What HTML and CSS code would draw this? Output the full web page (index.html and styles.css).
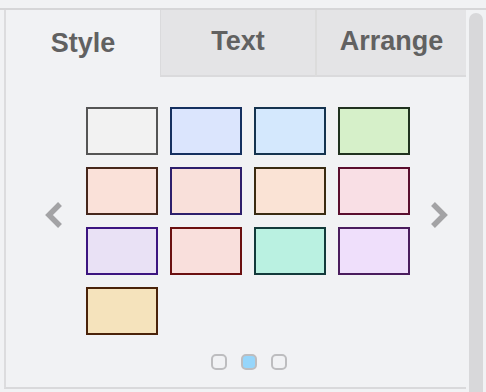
FILE: index.html
```html
<!DOCTYPE html>
<html lang="en">
  <head>
    <meta charset="UTF-8" />
    <meta name="viewport" content="width=device-width, initial-scale=1.0" />
    <title>Format Panel</title>
    <link rel="stylesheet" href="styles.css">
  </head>
  <body>
    <div class="frame">
      <div class="panel">
        <div class="tabs">
          <div class="tab tab-style active">Style</div>
          <div class="tab tab-text">Text</div>
          <div class="tab tab-arrange">Arrange</div>
        </div>
        <div class="panel-body">
          <div class="carousel">
            <div class="arrow-col left">
              <svg width="20" height="28" viewBox="0 0 20 28">
                <polyline points="16,3 5,14 16,25" />
              </svg>
            </div>
            <div class="swatches">
              <div class="swatch s1"></div>
              <div class="swatch s2"></div>
              <div class="swatch s3"></div>
              <div class="swatch s4"></div>
              <div class="swatch s5"></div>
              <div class="swatch s6"></div>
              <div class="swatch s7"></div>
              <div class="swatch s8"></div>
              <div class="swatch s9"></div>
              <div class="swatch s10"></div>
              <div class="swatch s11"></div>
              <div class="swatch s12"></div>
              <div class="swatch s13"></div>
            </div>
            <div class="arrow-col right">
              <svg width="20" height="28" viewBox="0 0 20 28">
                <polyline points="4,3 15,14 4,25" />
              </svg>
            </div>
          </div>
          <div class="dots">
            <span class="dot"></span>
            <span class="dot active"></span>
            <span class="dot"></span>
          </div>
        </div>
      </div>
      <div class="scrollbar"></div>
    </div>
  </body>
</html>
```

FILE: styles.css
```css
html,
body {
  margin: 0;
  height: 392px;
  overflow: hidden;
}
body {
  background-color: #f1f2f4;
  font-family: "Liberation Sans", Arial, sans-serif;
}
.frame {
  margin-top: 8px;
  border-top: 2px solid #d6d6d8;
  display: flex;
  height: 382px;
}
.panel {
  margin-left: 4px;
  width: 460px;
  height: 377px;
  border-left: 2px solid #dcdcde;
  border-bottom: 2px solid #d9d9db;
}
.scrollbar {
  margin-left: 3px;
  margin-top: 3px;
  width: 14px;
  background-color: #d8d8da;
  border-radius: 7px 7px 0 0;
}
.tabs {
  display: flex;
  height: 67px;
}
.tab {
  box-sizing: border-box;
  display: flex;
  align-items: center;
  justify-content: center;
  font-size: 27px;
  font-weight: bold;
  color: #616161;
  padding-bottom: 1px;
}
.tab-style {
  width: 154px;
}
.tab-text {
  width: 155px;
  border-left: 1px solid #dadadc;
}
.tab-arrange {
  width: 151px;
  border-left: 2px solid #dcdcdc;
}
.tab-text,
.tab-arrange {
  background-color: #e4e4e6;
  border-bottom: 2px solid #dadadc;
  padding-bottom: 2px;
}
.panel-body {
  padding-top: 30px;
}
.carousel {
  display: flex;
}
.arrow-col {
  padding-top: 94px;
}
.arrow-col.left {
  width: 80px;
}
.arrow-col.left svg {
  margin-left: 38px;
}
.arrow-col.right svg {
  margin-left: 19px;
}
.arrow-col svg {
  display: block;
  filter: blur(0.7px);
}
.arrow-col polyline {
  fill: none;
  stroke: #a3a3a5;
  stroke-width: 5.5;
}
.swatches {
  display: grid;
  grid-template-columns: repeat(4, 72px);
  grid-auto-rows: 48px;
  gap: 12px;
  width: 324px;
}
.swatch {
  box-sizing: border-box;
  border: 2px solid #555;
}
.s1 { background-color: #f2f2f2; border-color: #555555; }
.s2 { background-color: #dbe5fd; border-color: #15305f; }
.s3 { background-color: #d4e8fd; border-color: #15334f; }
.s4 { background-color: #d6f0c9; border-color: #20321f; }
.s5 { background-color: #fae1d9; border-color: #46271b; }
.s6 { background-color: #f9e0da; border-color: #2d1f6c; }
.s7 { background-color: #fae3d5; border-color: #3a2b12; }
.s8 { background-color: #f9dfe5; border-color: #5a0e2e; }
.s9 { background-color: #e9e1f5; border-color: #3c1580; }
.s10 { background-color: #f9dfdc; border-color: #6b1010; }
.s11 { background-color: #baf1e1; border-color: #133a3b; }
.s12 { background-color: #efdffb; border-color: #4a1d5d; }
.s13 { background-color: #f5e3bc; border-color: #4a2309; }
.dots {
  display: flex;
  gap: 14px;
  margin-top: 19px;
  margin-left: 205px;
}
.dot {
  box-sizing: border-box;
  width: 16px;
  height: 16px;
  border: 2px solid #bdbdbf;
  border-radius: 5px;
}
.dot.active {
  background-color: #96d6fb;
}
```
